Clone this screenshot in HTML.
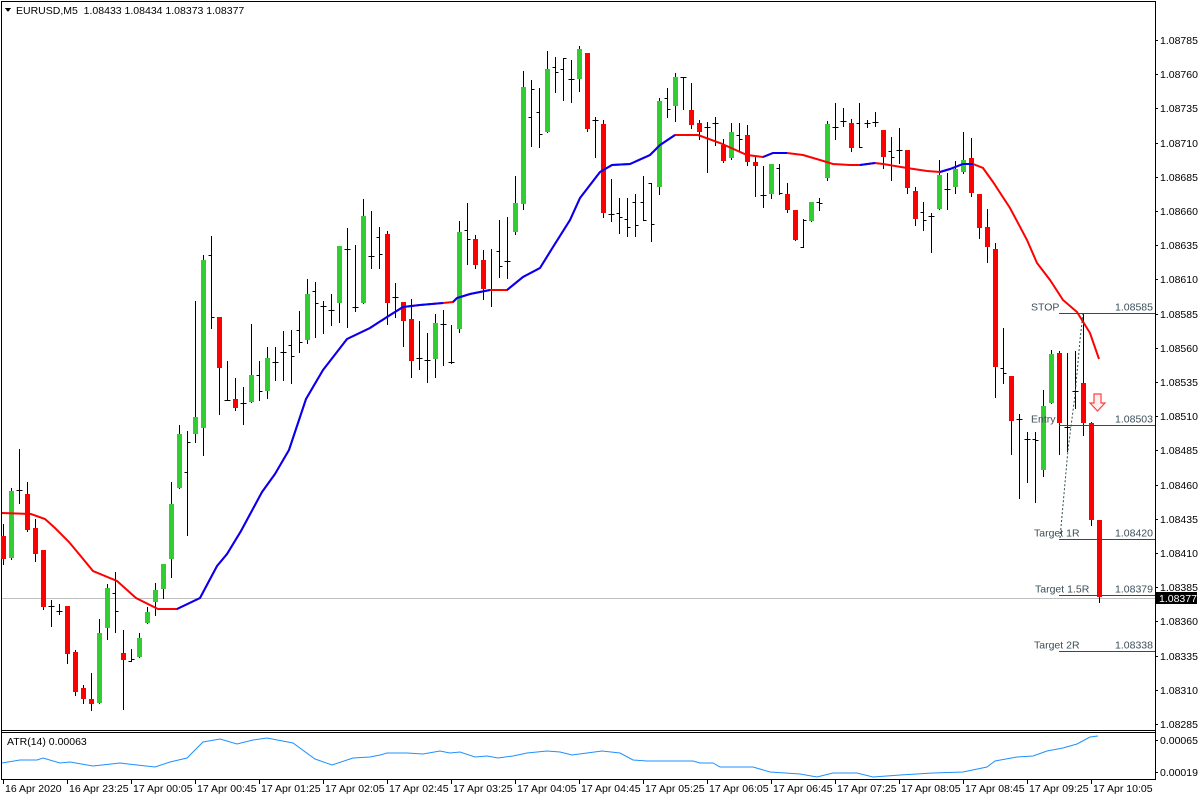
<!DOCTYPE html>
<html><head><meta charset="utf-8">
<style>
html,body{margin:0;padding:0;background:#fff;}
body{width:1200px;height:800px;overflow:hidden;position:relative;font-family:"Liberation Sans",sans-serif;}
svg{position:absolute;left:0;top:0;}
text{font-family:"Liberation Sans",sans-serif;font-size:10.5px;fill:#000;}
</style></head>
<body>
<svg id="s" width="1200" height="800" xmlns="http://www.w3.org/2000/svg" shape-rendering="crispEdges"></svg>
<script>
var D=[
['r',525,547,513,552],['g',481,546,478,547],['b',440,493,480,480],['r',484,519,472,520],['r',517,542,508,549],
['r',538,593,538,595],['b',587,612,592,592],['b',590,600,597,597],['r',592,639,592,648],['r',637,676,635,679],
['r',672,682,669,686],['r',682,687,657,693],['g',619,686,605,686],['g',575,614,571,624],['b',559,618,580,597],
['r',638,645,616,692],['b',634,646,646,644],['g',623,642,619,642],['g',598,609,593,609],['g',577,589,570,601],
['g',552,576,552,585],['g',494,547,472,564],['g',426,478,417,478],['b',423,524,463,434],['g',409,426,297,434],
['g',257,420,253,446],['b',234,323,253,313],['r',313,362,313,407],['b',355,393,393,393],['r',392,401,372,403],
['b',380,416,396,396],['g',369,395,319,395],['b',355,393,369,384],['g',352,384,342,391],
['b',347,380,362,362],['b',331,380,352,352],['b',330,383,345,356],['b',311,352,330,342],['g',294,340,279,343],
['b',282,337,291,303],['b',301,333,306,306],['b',294,325,310,310],['g',246,303,246,322],['b',228,327,249,249],
['b',245,311,307,307],['g',216,303,199,303],['b',211,268,256,256],['b',227,268,237,254],['r',234,303,231,324],
['b',283,317,297,297],['r',302,321,302,346],['r',319,361,299,377],['b',321,369,358,358],['b',333,382,360,360],
['g',323,359,314,377],['b',310,365,324,324],['b',325,363,362,362],['g',232,329,221,332],['b',203,264,230,239],
['r',239,265,235,268],['r',260,289,250,299],['b',249,306,290,290],['b',220,277,251,266],['b',217,278,261,261],
['g',203,232,176,234],['g',87,204,71,209],['b',80,146,117,89],['b',88,147,112,134],['g',69,132,51,132],
['b',57,92,67,72],['b',58,100,69,58],['b',60,102,79,79],['g',49,79,46,91],['r',53,129,53,131],
['b',117,157,120,120],['r',124,213,120,217],['b',179,221,214,214],['b',198,233,213,217],['b',198,236,219,227],
['b',194,236,202,225],['b',176,220,202,220],['b',183,241,183,224],['g',101,187,98,194],['b',88,117,98,109],
['g',77,106,73,121],['b',77,109,77,77],['r',110,125,83,128],['r',123,132,120,139],['b',122,172,127,127],
['b',117,145,123,123],['r',145,161,139,162],['g',132,158,123,159],['b',123,150,135,139],['r',135,162,125,165],
['r',162,166,157,196],['b',166,207,195,195],['g',164,194,164,198],['b',164,194,168,193],['r',194,210,183,212],
['r',210,240,210,240],['b',219,247,247,220],['g',202,221,202,221],['b',198,210,202,203],['g',124,178,121,180],
['b',103,139,127,127],['b',108,126,121,121],['r',123,148,119,151],['b',103,147,123,147],['b',120,127,123,123],
['b',112,126,122,122],['r',130,157,130,168],['b',137,180,151,157],['b',128,163,150,150],['r',150,188,150,193],
['r',191,219,187,225],['b',202,230,212,220],['b',213,252,216,216],['g',175,209,160,209],['b',173,209,189,189],
['g',169,187,161,193],['g',160,172,132,173],['r',158,193,138,196],['r',194,228,194,238],['r',227,247,209,262],
['r',249,367,243,397],['b',328,383,368,373],['r',376,421,376,454],['b',414,498,419,419],['b',432,482,439,439],
['b',432,502,439,440],['g',406,470,390,476],['g',354,403,350,403],['r',353,423,351,454],['b',353,451,427,427],
['b',351,408,391,391],['r',383,423,313,435],['r',423,520,422,525],['r',520,597,520,602]
];
var o='';
function L(x1,y1,x2,y2,c,w,extra){o+='<line x1="'+x1+'" y1="'+y1+'" x2="'+x2+'" y2="'+y2+'" stroke="'+c+'" stroke-width="'+(w||1)+'" '+(extra||'')+'/>';}
function T(x,y,s,a,c){o+='<text x="'+x+'" y="'+y+'"'+(a?' text-anchor="'+a+'"':'')+(c?' style="fill:'+c+'"':'')+'>'+s+'</text>';}
L(1.5,2,1.5,779,'#000');L(1,1.5,1156,1.5,'#000');L(1155.5,1,1155.5,779,'#000');
L(1,730.5,1156,730.5,'#000');L(1,732.5,1156,732.5,'#000');L(1,779.5,1156,779.5,'#000');
L(2,598.5,1155,598.5,'#c0c0c0');
for(var k=0;k<D.length;k++){
 var d=D[k].slice(1),t=D[k][0];
 if(k<34){for(var j=0;j<4;j++)d[j]=Math.round(180+(d[j]-180)*1.033);}
 var x=3.5+8*k;
 if(t=='b'){L(x,d[0],x,d[1]+1,'#000');L(x-3,d[2]+.5,x,d[2]+.5,'#000');L(x,d[3]+.5,x+3,d[3]+.5,'#000');}
 else{L(x,d[2],x,d[3]+1,'#000');o+='<rect x="'+(x-2.5)+'" y="'+d[0]+'" width="5" height="'+Math.max(2,d[1]-d[0])+'" fill="'+(t=='g'?'#32cd32':'#ff0000')+'"/>';}
}
var P=[[2,513],[31,514],[45,519],[55,528],[69,542],[79,554],[93,571],[117,581],[136,598],[158,609],[177,609],[200,598],[217,566],[227,554],[241,531],[262,492],[275,474],[289,450],[306,399],[323,370],[347,339],[370,328],[387,317],[403,307],[420,305],[443,303],[453,302],[457,298],[470,294],[490,290],[507,290],[523,277],[540,268],[553,247],[570,220],[580,198],[600,172],[612,165],[630,164],[650,155],[660,145],[675,135],[698,135],[720,143],[747,155],[763,157],[773,153],[787,153],[803,155],[820,160],[833,164],[850,165],[860,165],[875,163],[883,164],[907,168],[927,171],[940,172],[950,169],[963,164],[973,164],[983,168],[993,182],[1010,208],[1027,240],[1037,263],[1050,280],[1063,300],[1077,312],[1090,333],[1099,359]];
function poly(a,c){o+='<polyline fill="none" stroke="'+c+'" stroke-width="2" shape-rendering="auto" points="'+a.map(function(p){return p.join(',')}).join(' ')+'"/>';}
poly(P,'#ff0000');
var blue=[[177,443],[453,490],[507,675],[763,787],[858,877],[940,973]];
blue.forEach(function(r){poly(P.filter(function(p){return p[0]>=r[0]&&p[0]<=r[1];}),'#0000ff');});
var lv=[['STOP',313.5,'1.08585',1031],['Entry',425.5,'1.08503',1031],['Target 1R',539.5,'1.08420',1034],['Target 1.5R',595.5,'1.08379',1035],['Target 2R',651.5,'1.08338',1034]];
lv.forEach(function(l){L(1059,l[1],1155,l[1],'#2f4f4f');T(l[3],l[1]-3,l[0],'','#3c4f5a');T(1153,l[1]-3,l[2],'end','#3c4f5a');});
o+='<polyline fill="none" stroke="#2f4f4f" stroke-dasharray="2,2" shape-rendering="auto" points="1060,538 1068,450 1075,395 1080,340 1083,313"/>';
o+='<path d="M1094,394 L1101,394 L1101,403 L1105,403 L1097.5,411 L1090,403 L1094,403 Z" fill="#fff0f0" stroke="#ff4040" stroke-width="1.2" shape-rendering="auto"/>';
for(var i=0;i<=20;i++){var y=40+34.2*i,p=(1.08785-0.00025*i).toFixed(5);L(1155,Math.round(y)+.5,1158,Math.round(y)+.5,'#000');T(1160,Math.round(y)+4,p);}
o+='<rect x="1156" y="592" width="41" height="12" fill="#000"/>';
o+='<text x="1159" y="602" style="fill:#fff">1.08377</text>';
o+='<path d="M5,8 L11,8 L8,12 Z" fill="#000"/>';
T(16,14,'EURUSD,M5&#160;&#160;1.08433 1.08434 1.08373 1.08377');
T(7,745,'ATR(14) 0.00063');
T(1160,744,'0.00065');T(1160,776,'0.00019');
L(1155,740.5,1158,740.5,'#000');L(1155,772.5,1158,772.5,'#000');
var A=[[2,763],[20,760],[37,760],[43,758],[60,763],[70,762],[93,766],[120,763],[137,765],[155,767],[170,762],[187,758],[203,742],[220,739],[237,744],[253,740],[267,738],[293,743],[315,759],[332,765],[353,758],[370,757],[380,755],[387,753],[407,753],[423,754],[440,751],[450,753],[460,752],[475,757],[487,756],[498,758],[513,756],[527,753],[547,751],[560,752],[572,755],[587,753],[602,751],[620,753],[633,760],[647,761],[693,761],[700,763],[713,763],[720,767],[753,767],[770,772],[800,774],[817,777],[833,773],[857,773],[873,777],[900,775],[933,773],[963,772],[987,767],[995,761],[1017,757],[1033,756],[1047,751],[1063,748],[1077,744],[1090,737],[1098,736]];
o+='<polyline fill="none" stroke="#1e90ff" stroke-width="1" shape-rendering="auto" points="'+A.map(function(p){return p.join(',')}).join(' ')+'"/>';
var tl=['16 Apr 2020','16 Apr 23:25','17 Apr 00:05','17 Apr 00:45','17 Apr 01:25','17 Apr 02:05','17 Apr 02:45','17 Apr 03:25','17 Apr 04:05','17 Apr 04:45','17 Apr 05:25','17 Apr 06:05','17 Apr 06:45','17 Apr 07:25','17 Apr 08:05','17 Apr 08:45','17 Apr 09:25','17 Apr 10:05'];
tl.forEach(function(s,i){var x=3+64*i;L(x+.5,780,x+.5,784,'#000');T(x+2,792,s);});
document.getElementById('s').innerHTML=o;
</script>
</body></html>
